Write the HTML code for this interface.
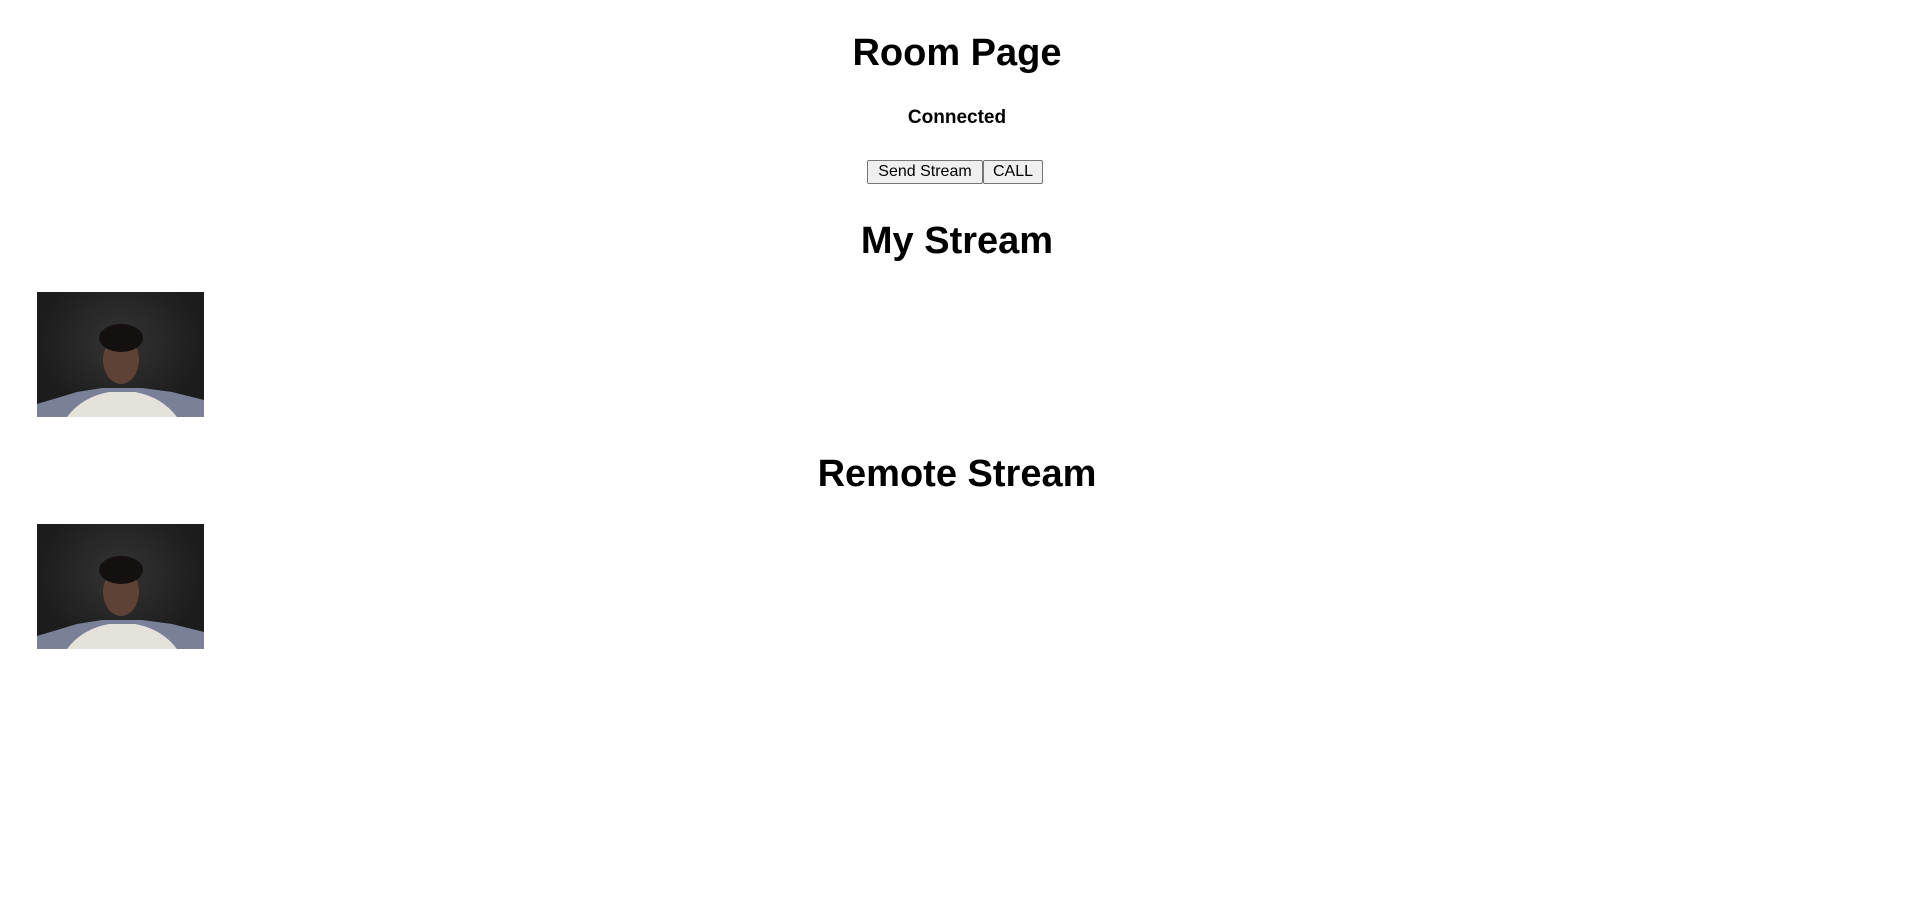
<!DOCTYPE html>
<html><head><style>
body{margin:0;width:1914px;height:903px;background:#fff;font-family:"Liberation Sans",sans-serif;position:relative;overflow:hidden}
.h{position:absolute;left:0;width:1914px;text-align:center;font-weight:bold;color:#000;margin:0;white-space:nowrap}
.btn{position:absolute;top:160px;height:24px;box-sizing:border-box;border:1px solid #767676;background:#efefef;font-size:16px;line-height:22px;text-align:center;border-radius:2px}
.cam{position:absolute;left:37px;width:167px;height:125px;overflow:hidden;background:radial-gradient(ellipse at 50% 40%,#343434,#1c1c1c 70%)}
</style></head><body>
<div class="h" style="top:30px;font-size:38px;line-height:46px">Room Page</div>
<div class="h" style="top:106px;font-size:19px;line-height:24px">Connected</div>
<div class="btn" style="left:867px;width:116px">Send Stream</div>
<div class="btn" style="left:983px;width:60px">CALL</div>
<div class="h" style="top:218px;font-size:38px;line-height:46px">My Stream</div>
<div class="cam" style="top:292px"><svg width="167" height="125">
<path d="M0 112 L40 100 L65 96 L105 96 L135 100 L167 108 L167 125 L0 125Z" fill="#7a8098"/>
<path d="M30 125 Q45 105 72 100 L98 100 Q125 105 140 125Z" fill="#e4e2da"/>
<ellipse cx="84" cy="68" rx="18" ry="24" fill="#5e4236"/>
<ellipse cx="84" cy="46" rx="22" ry="14" fill="#151010"/>
</svg></div>
<div class="h" style="top:451px;font-size:38px;line-height:46px">Remote Stream</div>
<div class="cam" style="top:524px"><svg width="167" height="125">
<path d="M0 112 L40 100 L65 96 L105 96 L135 100 L167 108 L167 125 L0 125Z" fill="#7a8098"/>
<path d="M30 125 Q45 105 72 100 L98 100 Q125 105 140 125Z" fill="#e4e2da"/>
<ellipse cx="84" cy="68" rx="18" ry="24" fill="#5e4236"/>
<ellipse cx="84" cy="46" rx="22" ry="14" fill="#151010"/>
</svg></div>
</body></html>
